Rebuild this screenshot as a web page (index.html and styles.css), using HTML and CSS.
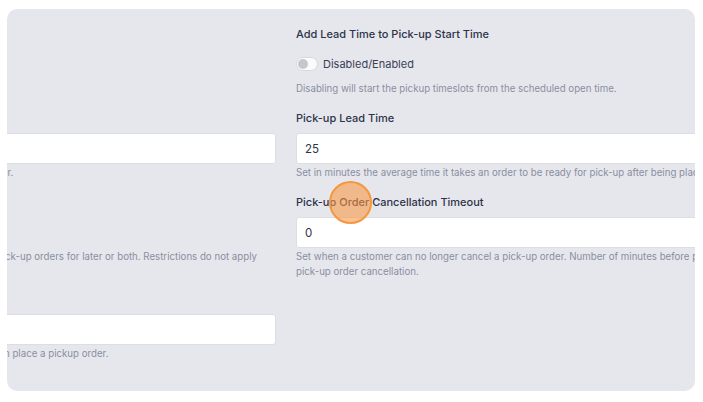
FILE: index.html
```html
<!DOCTYPE html>
<html lang="en">
<head>
<meta charset="utf-8">
<link rel="stylesheet" href="styles.css">
</head>
<body>
<div class="panel">
  <div class="grid">
    <div class="cell"></div>
    <div class="cell">
      <div class="label">Add Lead Time to Pick-up Start Time</div>
      <div class="toggle-row">
        <span class="toggle"><span class="knob"></span></span>
        <span class="toggle-text">Disabled/Enabled</span>
      </div>
      <div class="help help-toggle">Disabling will start the pickup timeslots from the scheduled open time.</div>
    </div>

    <div class="cell">
      <div class="label">Max Items</div>
      <div class="input"></div>
      <div class="help">Enter the maximal count of items per order.</div>
    </div>
    <div class="cell">
      <div class="label">Pick-up Lead Time</div>
      <div class="input">25</div>
      <div class="help">Set in minutes the average time it takes an order to be ready for pick-up after being placed.</div>
    </div>

    <div class="cell">
      <div class="label">Order Types</div>
      <div class="options"></div>
      <div class="help">Allow customer to order now, schedule pick-up orders for later or both. Restrictions do not apply administrators.</div>
    </div>
    <div class="cell">
      <div class="label">Pick-up Order Cancellation Timeout</div>
      <div class="input">0</div>
      <div class="help">Set when a customer can no longer cancel a pick-up order. Number of minutes before pickup for pick-up order cancellation.</div>
    </div>

    <div class="cell cell-last">
      <div class="label">Future Days</div>
      <div class="input"></div>
      <div class="help">Set how many days ahead a customer can place a pickup order.</div>
    </div>
    <div class="cell cell-last"></div>
  </div>
  <div class="click-marker"></div>
</div>
</body>
</html>
```

FILE: styles.css
```css
* { box-sizing: border-box; }
html, body { margin: 0; padding: 0; background: #ffffff; }
body {
  font-family: Inter, "Noto Sans", "Liberation Sans", sans-serif;
  width: 703px;
  height: 402px;
  overflow: hidden;
  padding: 9px 8px 11px 7px;
}
.panel {
  position: relative;
  height: 382px;
  background: #e6e7ed;
  border-radius: 10px;
  overflow: hidden;
  padding-top: 18px;
}
.grid {
  display: grid;
  grid-template-columns: 460px 460px;
  column-gap: 20px;
  row-gap: 15px;
  margin-left: -191px;
}
.cell { display: flex; flex-direction: column; }
.cell-last { margin-top: -2px; }
.label {
  font-size: 11px;
  line-height: 14px;
  font-weight: 500;
  color: #2e3348;
  margin-bottom: 8px;
}
.toggle-row {
  display: flex;
  align-items: center;
  gap: 5px;
  height: 14px;
  margin-top: 8px;
}
.toggle {
  width: 22px;
  height: 14px;
  border-radius: 7px;
  background: #fbfbfc;
  border: 1px solid #d9dae1;
  display: flex;
  align-items: center;
  padding-left: 1px;
}
.knob {
  width: 10px;
  height: 10px;
  border-radius: 50%;
  background: #c5c7ce;
}
.toggle-text {
  font-size: 11px;
  color: #3b4056;
}
.help {
  font-size: 9.7px;
  line-height: 15px;
  color: #8a8ea0;
  margin-top: 1px;
}
.help-toggle { margin-top: 10px; }
.input {
  height: 31px;
  background: #ffffff;
  border: 1px solid #dcdee4;
  border-radius: 3px;
  font-size: 11.5px;
  color: #2e3348;
  padding: 0 8px;
  display: flex;
  align-items: center;
}
.options { height: 31px; }
.click-marker {
  position: absolute;
  left: 322px;
  top: 172px;
  width: 43px;
  height: 43px;
  border-radius: 50%;
  background: rgba(248, 150, 66, 0.58);
  border: 2px solid #f5973f;
}
```
